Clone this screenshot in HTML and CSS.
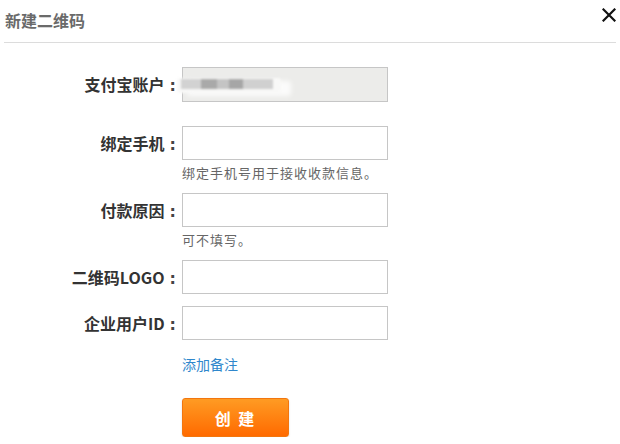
FILE: index.html
```html
<!DOCTYPE html>
<html lang="zh-CN">
<head>
<meta charset="utf-8">
<title>新建二维码</title>
<link rel="stylesheet" href="styles.css">
</head>
<body>
<div class="dialog">
  <div class="header">
    <span class="title">新建二维码</span>
    <span class="close" aria-label="关闭">
      <svg width="14" height="14" viewBox="0 0 14 14"><path d="M1.5 1.5 L12.5 12.5 M12.5 1.5 L1.5 12.5" stroke="#111" stroke-width="2.2" fill="none" stroke-linecap="square"/></svg>
    </span>
  </div>
  <div class="form">
    <div class="row r1">
      <label class="label">支付宝账户<span class="colon">:</span></label>
      <div class="field">
        <div class="account">
          <div class="blur-band">
            <span class="blob b1"></span><span class="blob b2"></span><span class="blob b3"></span><span class="blob b4"></span><span class="blob b5"></span>
          </div>
        </div>
      </div>
    </div>
    <div class="row r2">
      <label class="label">绑定手机<span class="colon">:</span></label>
      <div class="field">
        <input class="input" type="text">
        <div class="hint">绑定手机号用于接收收款信息。</div>
      </div>
    </div>
    <div class="row r3">
      <label class="label">付款原因<span class="colon">:</span></label>
      <div class="field">
        <input class="input" type="text">
        <div class="hint">可不填写。</div>
      </div>
    </div>
    <div class="row r4">
      <label class="label">二维码LOGO<span class="colon">:</span></label>
      <div class="field"><input class="input" type="text"></div>
    </div>
    <div class="row r5">
      <label class="label">企业用户ID<span class="colon">:</span></label>
      <div class="field"><input class="input" type="text"></div>
    </div>
    <div class="actions">
      <a class="link" href="#">添加备注</a>
      <button class="btn" type="button">创 建</button>
    </div>
  </div>
</div>
</body>
</html>
```
FILE: styles.css
```css
html, body {
  margin: 0;
  padding: 0;
  background: #fff;
}
body {
  font-family: "Noto Sans CJK SC", "Noto Sans", sans-serif;
  color: #333;
}
.header {
  height: 42px;
  margin: 0 4px;
  padding-left: 1px;
  border-bottom: 1px solid #dcdcdc;
  display: flex;
  align-items: center;
  justify-content: space-between;
}
.title {
  font-size: 16px;
  font-weight: bold;
  color: #6a6a6a;
  line-height: 20px;
  margin-top: -2px;
}
.close {
  display: flex;
  width: 14px;
  height: 14px;
  margin-top: -13px;
}
.form {
  padding-top: 24px;
}
.row {
  display: flex;
  align-items: flex-start;
}
.label {
  width: 182px;
  box-sizing: border-box;
  padding-right: 6px;
  text-align: right;
  font-family: "Noto Sans CJK SC", sans-serif;
  font-weight: bold;
  font-size: 16px;
  color: #333;
  height: 34px;
  line-height: 34px;
  white-space: nowrap;
}
.colon {
  display: inline-block;
  padding-left: 5px;
  font-family: "DejaVu Sans", sans-serif;
  font-weight: bold;
  font-size: 16px;
  color: #444;
}
.field {
  display: flex;
  flex-direction: column;
}
.input, .account {
  width: 206px;
  height: 34px;
  box-sizing: border-box;
  border: 1px solid #c6c6c6;
  background: #fff;
  margin: 0;
  padding: 0 6px;
  font-size: 14px;
  outline: none;
}
.account {
  background: #ececea;
  height: 35px;
  padding: 0;
  display: flex;
  align-items: center;
}
.blur-band {
  width: 104px;
  height: 15px;
  margin-left: -6px;
  margin-top: 2px;
  background: #f8f8f7;
  border-radius: 3px;
  display: flex;
  align-items: flex-start;
  padding-top: 1px;
  padding-left: 4px;
  box-sizing: border-box;
  filter: blur(1px);
  box-shadow: 10px 3px 4px rgba(255,255,255,0.8);
}
.blob {
  display: block;
  height: 10px;
}
.b1 { width: 20px; background: #d2d2d2; }
.b2 { width: 16px; background: #a9a9a9; }
.b3 { width: 12px; background: #c4c4c4; }
.b4 { width: 14px; background: #a6a6a6; }
.b5 { width: 30px; background: #d0d0d0; }
.r1 { margin-bottom: 24px; }
.r2 { margin-bottom: 12px; }
.r3 { margin-bottom: 12px; }
.r4 { margin-bottom: 12px; }
.hint {
  margin-top: 4px;
  font-size: 13px;
  letter-spacing: 1px;
  line-height: 17px;
  color: #666;
}
.actions {
  padding-left: 182px;
  padding-top: 14px;
  display: flex;
  flex-direction: column;
  align-items: flex-start;
}
.link {
  font-size: 14px;
  line-height: 20px;
  color: #2f87cc;
  text-decoration: none;
}
.btn {
  margin-top: 24px;
  width: 107px;
  height: 39px;
  border: 1px solid #f2760e;
  border-radius: 3px;
  background: linear-gradient(#ff9b23, #ff6a00);
  color: #fff;
  font-family: "Noto Sans CJK SC", sans-serif;
  font-size: 16px;
  font-weight: bold;
  letter-spacing: 2px;
  padding: 0;
  box-shadow: 0 1px 2px rgba(0,0,0,0.15);
}
```
